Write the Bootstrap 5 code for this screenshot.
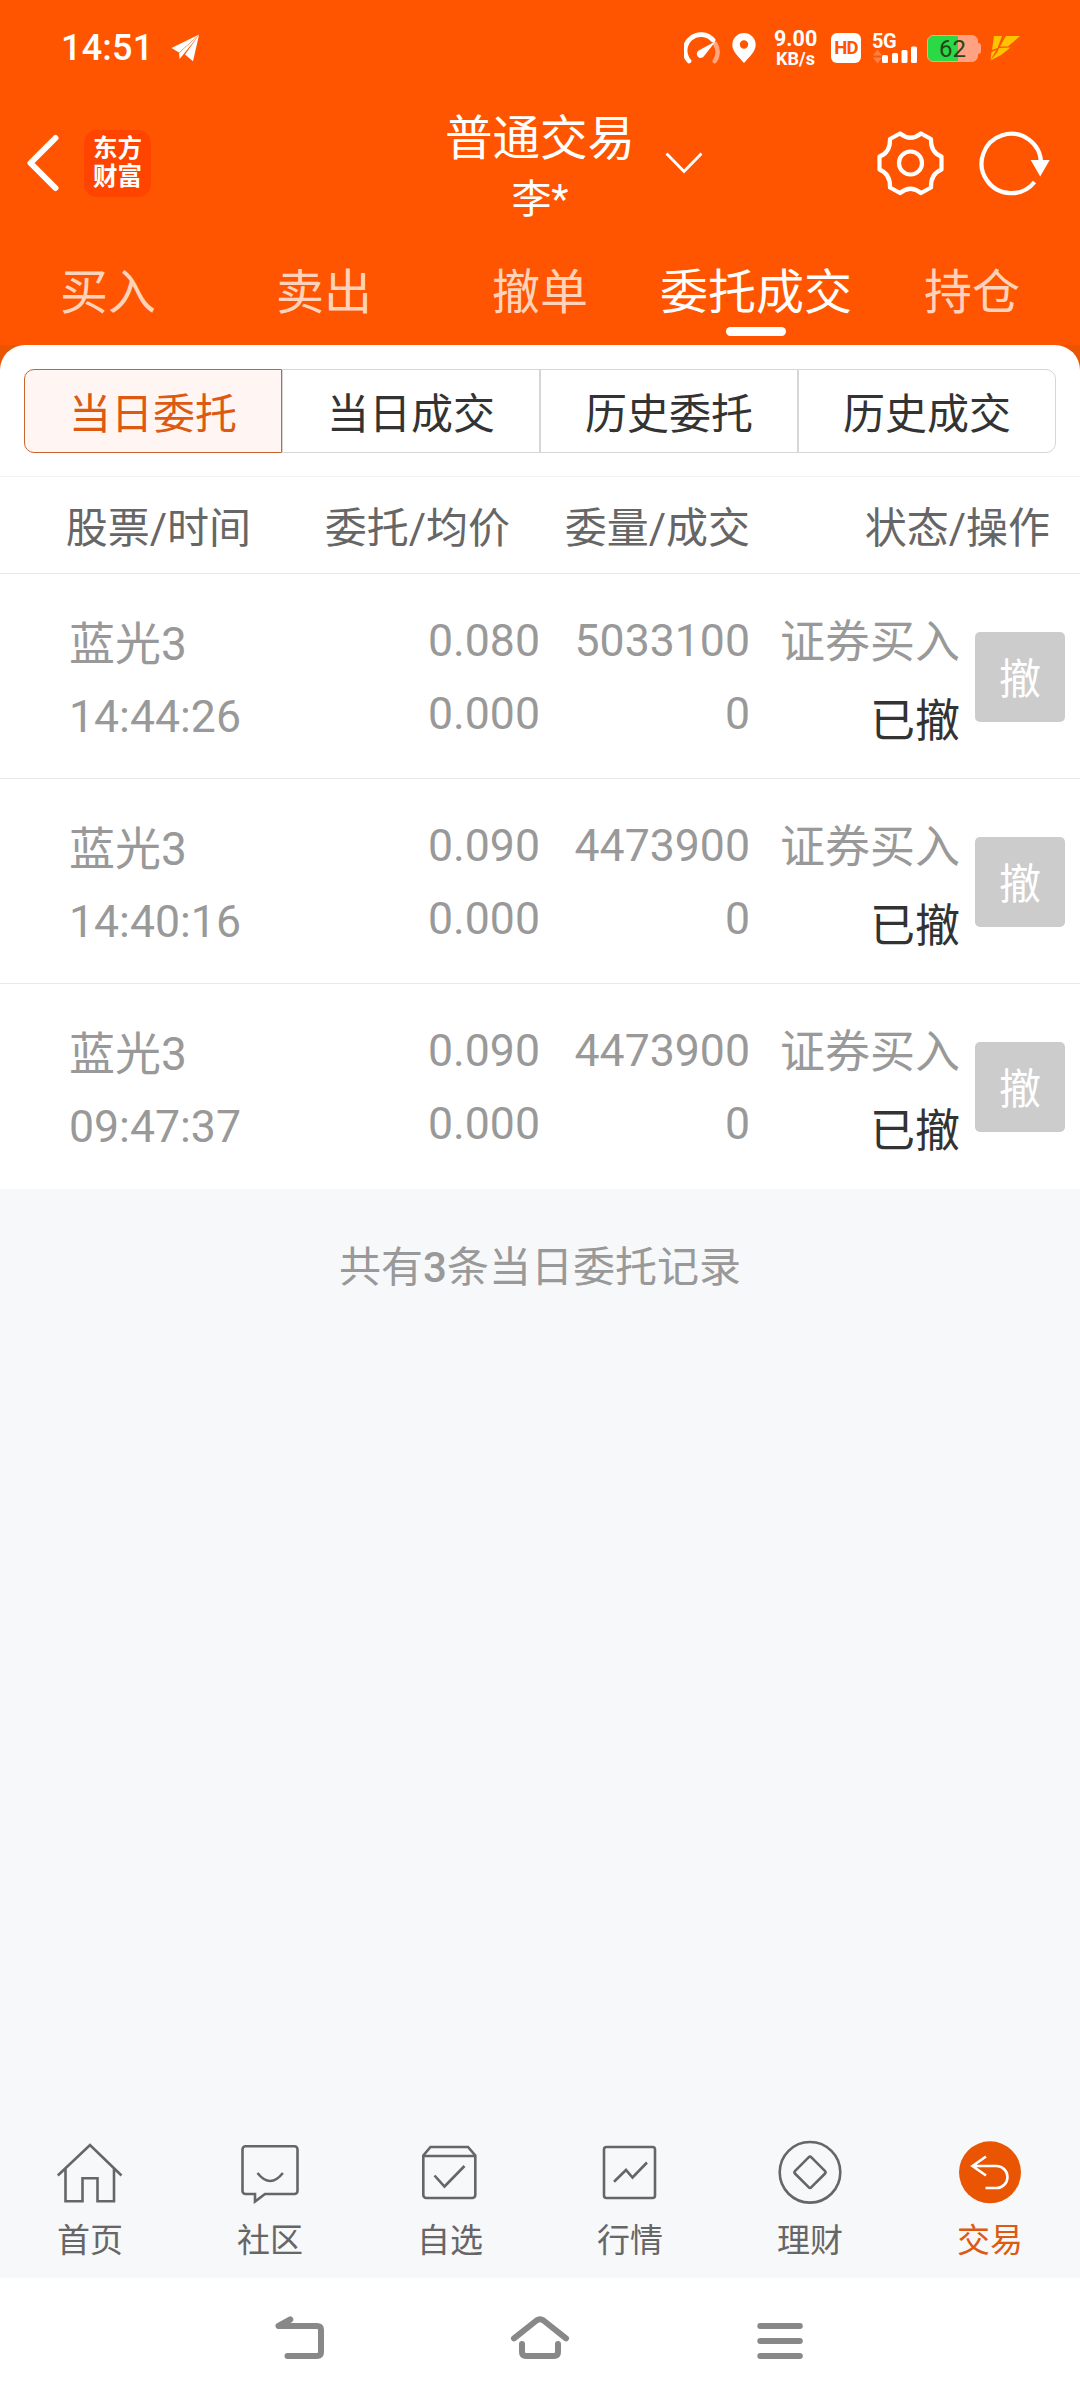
<!DOCTYPE html>
<html lang="zh-CN">
<head>
<meta charset="utf-8">
<meta name="viewport" content="width=device-width, initial-scale=1">
<title>普通交易</title>
<link href="https://cdn.jsdelivr.net/npm/bootstrap@5.3.0/dist/css/bootstrap.min.css" rel="stylesheet">
<style>
  body { width: 1080px; height: 2404px; overflow: hidden; background: #f7f8fa; font-family: Roboto, "Noto Sans CJK SC", sans-serif; color: #333; }
  svg { display: block; flex: none; }
  .top-area { height: 370px; background: linear-gradient(#ff5500 345px, #ea5504 345px); }
  .status-bar { height: 96px; padding-left: 61px; }
  .clock { font-size: 36px; font-weight: 500; line-height: 96px; width: 109px; letter-spacing: .2px; }
  .net-speed { width: 43px; margin-left: 18px; font-weight: 700; text-align: center; white-space: nowrap; }
  .net-speed .num { font-size: 21.5px; line-height: 20px; }
  .net-speed .unit { font-size: 18px; line-height: 19px; }
  .hd-box { width: 30px; height: 30px; margin-left: 14px; border-radius: 6px; background: #fff; color: #ff5500; font-size: 18.5px; line-height: 31px; font-weight: 700; letter-spacing: -.8px; }
  .cell-signal { width: 46px; height: 32px; margin-left: 11px; }
  .cell-signal .gen { font-size: 20px; font-weight: 700; line-height: 18px; letter-spacing: -.5px; }
  .battery { width: 51px; height: 27px; margin-left: 9px; border-radius: 6px; border: 1px solid #ffa284; background: linear-gradient(90deg, #2bd846 62%, #ffa284 62%); color: #26451b; font-size: 24px; line-height: 27px; }
  .battery-tip { width: 3px; height: 11px; background: #ffa284; border-radius: 0 3px 3px 0; }
  .title-bar { height: 134px; padding-left: 26px; }
  .logo-tile { width: 67px; height: 67px; margin-left: 24px; border-radius: 13px; background: #ff4400; font-size: 24.5px; font-weight: 700; line-height: 28.5px; }
  .title-block { width: 190px; margin-left: 294px; margin-right: 1px; padding-top: 10px; }
  .title-block .main-title { font-size: 47.5px; line-height: 64px; height: 64px; }
  .title-block .owner { font-size: 40px; line-height: 58px; }
  .trade-tabs { height: 115px; }
  .trade-tabs a { flex: 1 1 0; text-align: center; font-size: 48px; line-height: 64px; padding-top: 31px; color: #ffd3bb; text-decoration: none; white-space: nowrap; }
  .trade-tabs a.current { color: #fff; }
  .trade-tabs a.current::after { content: ""; display: block; width: 60px; height: 9px; margin: 2px auto 0; border-radius: 5px; background: #fff; }
  .sheet { margin-top: -25px; border-radius: 25px 25px 0 0; background: #fff; }
  .seg-wrap { height: 132px; padding: 24px 24px 0; border-bottom: 1px solid #f3f3f3; }
  .seg { height: 84px; }
  .seg .seg-item { flex: 1 1 0; border: 1px solid #d6d6d6; border-left-width: 1px; font-size: 42px; line-height: 89px; text-align: center; color: #333; }
  .seg .seg-item:last-child { border-radius: 0 10px 10px 0; }
  .seg .seg-item.current { border-color: #c9662f; border-radius: 10px 0 0 10px; background: #fff6f3; color: #dd5a12; }
  .list-head { height: 97px; border-bottom: 1px solid #e8e8e8; font-size: 42px; line-height: 103px; color: #666; }
  .order { height: 205px; border-bottom: 1px solid #e8e8e8; font-size: 45px; line-height: 73px; color: #999; }
  .order:last-child { border-bottom: 0; }
  .c-name { width: 300px; padding: 34px 0 0 69px; }
  .c-name div:first-child { font-size: 46px; }
  .c-name div:last-child { font-size: 44.6px; line-height: 72px; }
  .c-price, .c-qty { font-size: 44.6px; }
  .c-price { width: 240px; padding-top: 31px; }
  .c-qty { width: 210px; padding-top: 31px; }
  .c-state { width: 210px; padding-top: 32px; }
  .c-state .done { color: #333; line-height: 86px; }
  .undo { width: 90px; height: 90px; margin: 58px 0 0 15px; border-radius: 5px; background: #ccc; color: #fff; font-size: 42px; line-height: 96px; padding: 0; border: 0; }
  .total { font-size: 42px; line-height: 60px; padding-top: 49px; color: #999; }
  .total b { font-weight: 500; }
  .tabbar { height: 158px; }
  .tabbar a { flex: 1 1 0; text-align: center; font-size: 33px; line-height: 48px; color: #666; text-decoration: none; }
  .tabbar svg { margin: 18px auto 11px; fill: none; stroke: #666; stroke-width: 2.6; }
  .tabbar a.current { color: #dd5a12; }
  .sys-nav { height: 126px; background: #fff; }
  .sys-nav svg { fill: none; stroke: #888; stroke-width: 6; stroke-linecap: round; stroke-linejoin: round; }
</style>
</head>
<body class="d-flex flex-column">
<header class="top-area text-white">
  <div class="status-bar d-flex align-items-center">
    <span class="clock">14:51</span>
    <svg width="30" height="30" viewBox="169 34 30 30" fill="#fff"><path d="M198 35.5 170.500 49l7.500 4.500zM198 36l-14 19.500 8 6.700zM198 36l-19.800 18 .3 6 3-3.500z"/></svg>
    <svg class="ms-auto" width="36" height="32" viewBox="684 32 36 32"><path d="M715.300 44a15.500 15.500 0 0 1-.5 17" fill="none" stroke="#ffa680" stroke-width="4.600" stroke-linecap="round"/><path d="M689 61a15.500 15.500 0 0 1 24-21" fill="none" stroke="#fff" stroke-width="4.800" stroke-linecap="round"/><path d="M715.500 41.500 699 50.300a4 4 0 1 0 5.300 5.500z" fill="#fff"/></svg>
    <svg style="margin-left:12px" width="24" height="32" viewBox="732 32 24 32"><path fill="#fff" fill-rule="evenodd" d="M744 33a11.700 11.700 0 0 1 11.700 11.700C755.700 52 748 58 744 63c-4-5-11.700-11-11.700-18.300A11.700 11.700 0 0 1 744 33zm0 7.300a4.200 4.200 0 1 0 0 8.400 4.200 4.200 0 0 0 0-8.400z"/></svg>
    <div class="net-speed"><div class="num">9.00</div><div class="unit">KB/s</div></div>
    <div class="hd-box text-center">HD</div>
    <div class="cell-signal position-relative">
      <div class="gen">5G</div>
      <svg class="position-absolute top-0 start-0" width="46" height="32" viewBox="872 32 46 32"><path fill="#ff8044" d="M873 55.500l4.500-6 4.500 6zM873 57.500h9l-4.500 6z"/><g fill="#fff"><rect x="882" y="55" width="6" height="8" rx="1.500"/><rect x="892" y="53" width="6" height="10" rx="1.500"/><rect x="901.500" y="50" width="6" height="13" rx="1.500"/><rect x="911" y="46.500" width="6" height="16.500" rx="1.500"/></g></svg>
    </div>
    <div class="battery text-center">62</div><div class="battery-tip"></div>
    <svg style="margin:0 60px 0 9px" width="30" height="26" viewBox="990 35 30 26"><path fill="#ffc400" d="M994 36h8l-4.500 12-5.500 2zM1006 36h14l-12 10.500h-8zM999 48l11.500-.5-9.500 7.500-10.500 5.500 7-8.500zM991.500 52l5-2-6 10z"/></svg>
  </div>
  <div class="title-bar d-flex align-items-center">
    <svg width="34" height="58" viewBox="26 134.500 34 58"><path d="M55.500 138.500 30.500 163.500 55.500 188.500" fill="none" stroke="#fff" stroke-width="6" stroke-linecap="round" stroke-linejoin="round"/></svg>
    <div class="logo-tile d-flex flex-column justify-content-center text-center"><div>东方</div><div>财富</div></div>
    <div class="title-block text-center text-nowrap"><div class="main-title">普通交易</div><div class="owner">李*</div></div>
    <svg style="margin-left:28px" width="40" height="28" viewBox="664 149 40 28"><path d="M666.500 153.500 684 171.500 701.500 153.500" fill="none" stroke="#fff" stroke-width="2.800"/></svg>
    <svg style="margin-left:172px" width="70" height="70" viewBox="876 128 70 70" fill="none" stroke="#fff" stroke-width="4.200" stroke-linejoin="round"><path d="M900 133.500q10.500 8.500 21 0l10 5.500q-.5 13.500 10.500 17.500v13q-11 4.500-10.500 18l-10 5.500q-10.500-8.500-21 0l-10-5.500q.5-13.500-10.500-18v-13q11-4 10.500-17.500z"/><circle cx="910.500" cy="163" r="11.500"/></svg>
    <svg style="margin-left:32px" width="74" height="70" viewBox="978 128 74 70"><path d="M1034.500 182a29.700 29.700 0 1 1 6.500-19" fill="none" stroke="#fff" stroke-width="4.200"/><path d="M1030.700 160h19l-9.500 16.500z" fill="#fff"/></svg>
  </div>
  <nav class="trade-tabs d-flex">
    <a href="#">买入</a><a href="#">卖出</a><a href="#">撤单</a><a href="#" class="current">委托成交</a><a href="#">持仓</a>
  </nav>
</header>

<main class="flex-grow-1">
  <div class="sheet position-relative">
    <div class="seg-wrap">
      <div class="seg d-flex">
        <div class="seg-item current">当日委托</div><div class="seg-item">当日成交</div><div class="seg-item">历史委托</div><div class="seg-item">历史成交</div>
      </div>
    </div>
    <div class="list-head d-flex text-end text-nowrap">
      <div style="width:251px">股票/时间</div><div style="width:259px">委托/均价</div><div style="width:240px">委量/成交</div><div style="width:300px">状态/操作</div>
    </div>
    <div>
      <div class="order d-flex text-end">
        <div class="c-name text-start"><div>蓝光3</div><div>14:44:26</div></div>
        <div class="c-price"><div>0.080</div><div>0.000</div></div>
        <div class="c-qty"><div>5033100</div><div>0</div></div>
        <div class="c-state"><div>证券买入</div><div class="done">已撤</div></div>
        <button class="undo">撤</button>
      </div>
      <div class="order d-flex text-end">
        <div class="c-name text-start"><div>蓝光3</div><div>14:40:16</div></div>
        <div class="c-price"><div>0.090</div><div>0.000</div></div>
        <div class="c-qty"><div>4473900</div><div>0</div></div>
        <div class="c-state"><div>证券买入</div><div class="done">已撤</div></div>
        <button class="undo">撤</button>
      </div>
      <div class="order d-flex text-end">
        <div class="c-name text-start"><div>蓝光3</div><div>09:47:37</div></div>
        <div class="c-price"><div>0.090</div><div>0.000</div></div>
        <div class="c-qty"><div>4473900</div><div>0</div></div>
        <div class="c-state"><div>证券买入</div><div class="done">已撤</div></div>
        <button class="undo">撤</button>
      </div>
    </div>
  </div>
  <div class="total text-center">共有<b>3</b>条当日委托记录</div>
</main>

<nav class="tabbar d-flex">
  <a href="#"><svg width="68" height="68" viewBox="56 2138 68 68"><path d="M57.800 2175.500 90 2145l31.500 30.500M65.500 2169v32.200h17v-23h15v23H114V2169"/></svg>首页</a>
  <a href="#"><svg width="68" height="68" viewBox="235.500 2138 68 68"><path d="M245 2146.300h49a3 3 0 0 1 3 3V2191a3 3 0 0 1-3 3h-29.500l-10 7.500V2194H245a3 3 0 0 1-3-3v-41.700a3 3 0 0 1 3-3zM257 2173q12.700 16 25.400 0"/></svg>社区</a>
  <a href="#"><svg width="68" height="68" viewBox="416 2138 68 68"><path d="M423.300 2155.500 430.500 2147h37.500l7.300 8.500V2195a3 3 0 0 1-3 3h-46a3 3 0 0 1-3-3zM423.300 2156h52M434.500 2175.500l10 11 20-20.500"/></svg>自选</a>
  <a href="#"><svg width="68" height="68" viewBox="596 2138 68 68"><rect x="604" y="2147" width="51" height="51" rx="2.500"/><path d="M614 2181.700 626 2170l6.500 7.500 14.500-15"/></svg>行情</a>
  <a href="#"><svg width="68" height="68" viewBox="775.500 2138 68 68"><circle cx="809.500" cy="2172.300" r="30.300"/><rect x="798" y="2160.800" width="23" height="23" rx="2" transform="rotate(45 809.500 2172.300)"/></svg>理财</a>
  <a href="#" class="current"><svg width="68" height="68" viewBox="955.500 2138 68 68"><circle cx="989.500" cy="2172.300" r="31" fill="#ea5504" stroke="none"/><path stroke="#fff" d="M985.500 2156.500 972 2166l13.500 9.500M972 2166h24a11 11 0 0 1 0 22h-11"/></svg>交易</a>
</nav>
<div class="sys-nav d-flex align-items-center">
  <svg style="margin-left:270px" width="60" height="60" viewBox="270 2311 60 60"><path d="M290.300 2319.500 278.500 2326H317q4 0 4 4v22q0 4-4 4h-29.500"/></svg>
  <svg style="margin-left:180px" width="60" height="60" viewBox="510 2311 60 60"><path d="M514 2338.300 536.500 2320.500q3.500-2.500 7 0L566 2338.300M522 2344v8q0 4 4 4h28q4 0 4-4v-8"/></svg>
  <svg style="margin-left:180px" width="60" height="60" viewBox="750 2311 60 60"><path d="M760.300 2326h39.500M760.300 2341h39.500M760.300 2356h39.500"/></svg>
</div>
<script src="https://cdn.jsdelivr.net/npm/bootstrap@5.3.0/dist/js/bootstrap.bundle.min.js"></script>
</body>
</html>
